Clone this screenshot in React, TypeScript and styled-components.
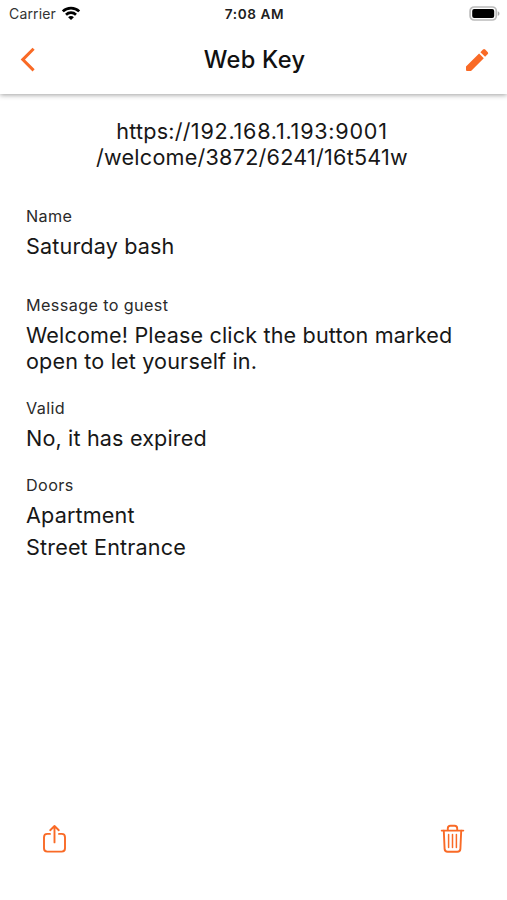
import React from "react";
import styled, { createGlobalStyle } from "styled-components";

const accent = "#f96a26";

const GlobalStyle = createGlobalStyle`
  * { box-sizing: border-box; }
  body { margin: 0; background: #fff; }
`;

const Screen = styled.div`
  width: 100%;
  height: 900px;
  display: flex;
  flex-direction: column;
  overflow: hidden;
  background: #fff;
  color: #171717;
  font-family: Inter, "Liberation Sans", sans-serif;
  white-space: nowrap;
`;

const Header = styled.header`
  height: 94px;
  flex: none;
  background: #fff;
  box-shadow: 0 1px 5px rgba(0, 0, 0, 0.38);
`;

const StatusBar = styled.div`
  height: 27px;
  display: grid;
  grid-template-columns: 1fr auto 1fr;
  align-items: center;
  padding: 0 7px 0 9px;
`;

const Carrier = styled.div`
  display: flex;
  align-items: center;
  gap: 5px;
  font-size: 14px;
  letter-spacing: 0.15px;
  line-height: 20px;
  color: #333;

  svg {
    margin-bottom: 2px;
  }
`;

const Clock = styled.div`
  font-size: 13.6px;
  font-weight: 600;
  letter-spacing: 0.6px;
  line-height: 20px;
  color: #202020;
`;

const BatterySlot = styled.div`
  justify-self: end;
  display: flex;
`;

const TitleBar = styled.div`
  height: 66px;
  display: grid;
  grid-template-columns: 1fr auto 1fr;
  align-items: center;
  padding: 0 18px 0 20px;
`;

const IconButton = styled.button<{ $end?: boolean }>`
  display: flex;
  padding: 0;
  border: 0;
  background: none;
  color: ${accent};
  justify-self: ${(p) => (p.$end ? "end" : "start")};
`;

const Title = styled.h1`
  margin: 0;
  font-size: 23.6px;
  font-weight: 500;
  letter-spacing: 0.3px;
  line-height: 30px;
  color: #111;
`;

const Content = styled.main`
  flex: 1;
  padding: 24px 26px 0;
`;

const Link = styled.p`
  margin: 0 0 36px;
  padding-right: 3px;
  text-align: center;
  font-size: 21.6px;
  line-height: 26px;
  letter-spacing: 0.23px;
`;

const Host = styled.span`
  letter-spacing: 0.75px;
`;

const Field = styled.section<{ $gap: number }>`
  margin-bottom: ${(p) => p.$gap}px;
`;

const Label = styled.h2`
  margin: 0 0 7px;
  font-size: 16.2px;
  font-weight: 400;
  line-height: 20px;
  letter-spacing: 0.38px;
  color: #2a2a2a;
`;

const Value = styled.p`
  margin: 0;
  font-size: 21.6px;
  line-height: 26px;
  letter-spacing: 0.15px;

  & + & {
    margin-top: 6px;
  }
`;

const Actions = styled.footer`
  flex: none;
  height: 76px;
  display: flex;
  justify-content: space-between;
  align-items: flex-start;
  padding: 0 42px;
`;

const WifiIcon = () => (
  <svg width="20" height="16" viewBox="0 0 20 16" fill="none" stroke="#000" strokeWidth="2.7">
    <path d="M1.8 6.4C6.3 1.9 13.7 1.9 18.2 6.4" />
    <path d="M5 9.7C7.8 7 12.2 7 15 9.7" />
    <path d="M10 15.1L7.1 12.2C8.7 10.7 11.3 10.7 12.9 12.2Z" fill="#000" stroke="none" />
  </svg>
);

const BatteryIcon = () => (
  <svg width="31" height="15" viewBox="0 0 31 15">
    <rect x="1.1" y="1" width="26.2" height="13" rx="4" fill="#fff" stroke="#bbb" strokeWidth="1.7" />
    <rect x="3.2" y="3" width="22" height="9" rx="2" fill="#000" />
    <path d="M28.8 5.2V9.8C31 9 31 6 28.8 5.2Z" fill="#aaa" />
  </svg>
);

const BackIcon = () => (
  <svg width="16" height="26" viewBox="0 0 16 26" fill="none" stroke="currentColor" strokeWidth="3">
    <path d="M13.6 1.8L2.8 12.6L13.6 23.4" />
  </svg>
);

const PencilIcon = () => (
  <svg width="24" height="24" viewBox="0 0 24 24" fill="currentColor">
    <path d="M1 18.6L14.1 5.5L18.8 10.2L6.3 22.7Q6 23 5.5 23H2Q1 23 1 22Z" />
    <path d="M15.4 4.2L18 1.6Q19.1.6 20.2 1.6L22.8 4.2Q23.6 5.1 22.8 6.1L20.1 8.8Z" />
  </svg>
);

const ShareIcon = () => (
  <svg width="25" height="30" viewBox="0 0 25 30" fill="none" stroke="currentColor" strokeWidth="1.9" strokeLinecap="round" strokeLinejoin="round">
    <path d="M8 9.9H5.3Q2 9.9 2 13.2V24.2Q2 27.6 5.3 27.6H19.7Q23 27.6 23 24.2V13.2Q23 9.9 19.7 9.9H17" />
    <path d="M12.5 18.4V2M8.2 6.2L12.5 2L16.8 6.2" />
  </svg>
);

const TrashIcon = () => (
  <svg width="25" height="30" viewBox="0 0 25 30" fill="none" stroke="currentColor" strokeWidth="1.9" strokeLinecap="round" strokeLinejoin="round">
    <path d="M1.7 6.6H23.3M7.8 6.4V4.4Q7.8 1.8 10.4 1.8H14.6Q17.2 1.8 17.2 4.4V6.4" />
    <path d="M3.8 6.8L4.6 24.9Q4.8 27.8 7.6 27.8H17.4Q20.2 27.8 20.4 24.9L21.2 6.8" />
    <path d="M8.6 10.4V23.6M12.5 10.4V23.6M16.4 10.4V23.6" strokeWidth="1.5" />
  </svg>
);

export default function App() {
  return (
    <>
      <GlobalStyle />
      <Screen>
        <Header>
          <StatusBar>
            <Carrier>Carrier <WifiIcon /></Carrier>
            <Clock>7:08 AM</Clock>
            <BatterySlot><BatteryIcon /></BatterySlot>
          </StatusBar>
          <TitleBar>
            <IconButton aria-label="Back"><BackIcon /></IconButton>
            <Title>Web Key</Title>
            <IconButton $end aria-label="Edit"><PencilIcon /></IconButton>
          </TitleBar>
        </Header>
        <Content>
          <Link>https://<Host>192.168.1.193:9001</Host><br />/welcome/3872/6241/16t541w</Link>
          <Field $gap={36}>
            <Label>Name</Label>
            <Value>Saturday bash</Value>
          </Field>
          <Field $gap={24}>
            <Label>Message to guest</Label>
            <Value>Welcome! Please click the button marked<br />open to let yourself in.</Value>
          </Field>
          <Field $gap={24}>
            <Label>Valid</Label>
            <Value>No, it has expired</Value>
          </Field>
          <Field $gap={0}>
            <Label>Doors</Label>
            <Value>Apartment</Value>
            <Value>Street Entrance</Value>
          </Field>
        </Content>
        <Actions>
          <IconButton aria-label="Share"><ShareIcon /></IconButton>
          <IconButton aria-label="Delete"><TrashIcon /></IconButton>
        </Actions>
      </Screen>
    </>
  );
}
